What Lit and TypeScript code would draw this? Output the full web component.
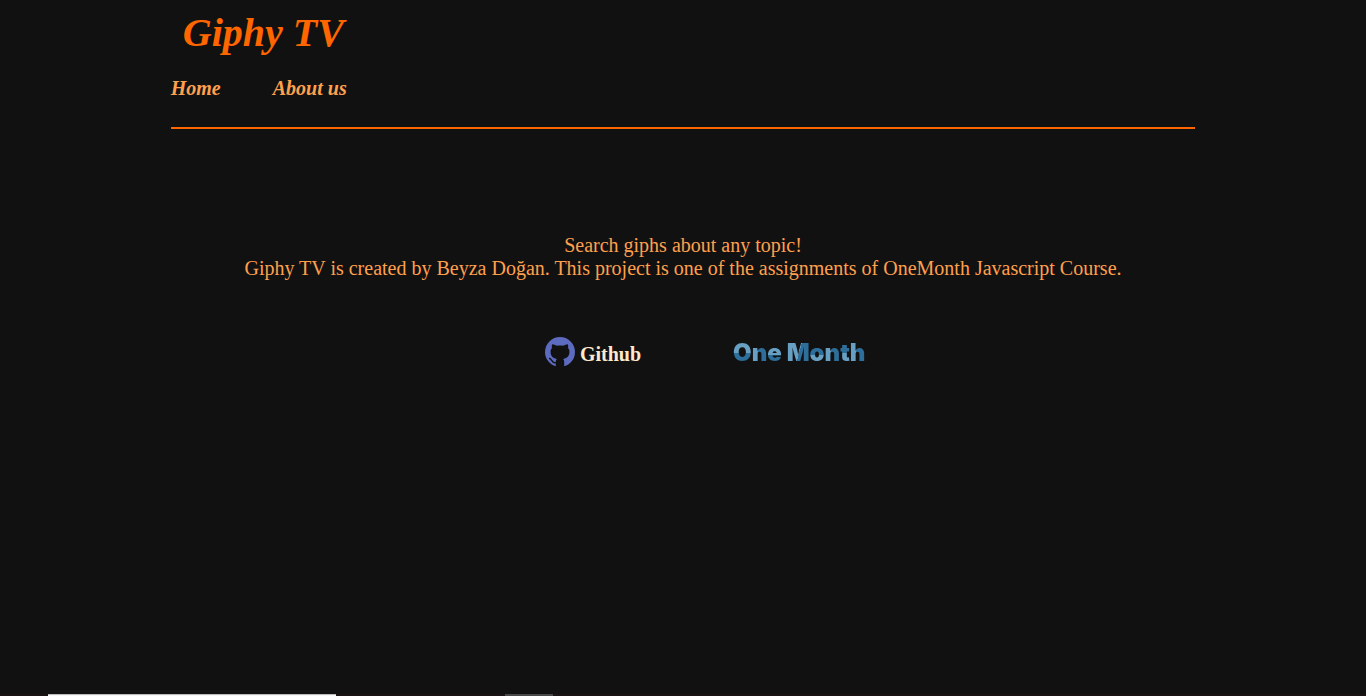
import { LitElement, html, css } from "lit";
import { customElement } from "lit/decorators.js";

// Letters of the two-tone wordmark, each with the class that colours it
const WORDMARK: [string, string][] = [
  ["O", "cap-o"],
  ["n", "stem"],
  ["e", "bowl"],
  [" ", ""],
  ["M", "cap-m"],
  ["o", "ring"],
  ["n", "stem"],
  ["t", "cross"],
  ["h", "stem"],
];

@customElement("app-root")
export class AppRoot extends LitElement {
  static styles = css`
    :host {
      --light: #68a0c4;
      --dark: #2d6f9a;
      display: flex;
      flex-direction: column;
      min-height: 100vh;
      background: #111111;
      color: #ffa04d;
      font: 20px/23px "Liberation Serif", "Times New Roman", serif;
    }
    .container {
      width: 75%;
      margin: 0 auto;
      flex: 1;
    }
    .brand {
      margin: 0;
      padding: 9px 12px 0;
      font-size: 40px;
      line-height: 48px;
      font-weight: bold;
      font-style: italic;
      color: #ff6600;
    }
    .nav {
      display: flex;
      gap: 52px;
      padding: 20px 0 27px;
      border-bottom: 2px solid #ff6600;
    }
    .nav a {
      color: inherit;
      text-decoration: none;
      font-weight: bold;
      font-style: italic;
    }
    .about {
      margin: 105px 0 0;
      text-align: center;
    }
    .links {
      display: flex;
      justify-content: center;
      align-items: center;
      gap: 92px;
      padding: 57px 0 0 42px;
    }
    .links a {
      display: flex;
      align-items: center;
      gap: 5px;
      color: #ffe8cc;
      text-decoration: none;
      font-weight: bold;
    }
    .label {
      padding-top: 4px;
    }
    .mark {
      width: 30px;
      height: 30px;
    }
    .wordmark {
      display: flex;
      width: 130px;
      padding-top: 2px;
      font: 900 24px/24px "Inter", sans-serif;
      white-space: pre;
    }
    .letter {
      color: transparent;
      -webkit-background-clip: text;
      background-clip: text;
    }
    .cap-o { background-image: linear-gradient(var(--light) 50%, var(--dark) 50%); }
    .cap-m { background-image: linear-gradient(105deg, var(--light) 52%, var(--dark) 52%); }
    .stem { background-image: linear-gradient(90deg, var(--light) 40%, var(--dark) 40%); }
    .bowl { background-image: linear-gradient(var(--light) 60%, var(--dark) 60%); }
    .ring { background-image: linear-gradient(var(--dark) 58%, var(--light) 58%); }
    .cross { background-image: linear-gradient(var(--dark) 50%, var(--light) 50%); }
    .strip {
      display: grid;
      grid-template-columns: 48px 288px 169px 48px 1fr;
      height: 2px;
      background: #191314;
    }
    .tab {
      grid-column: 2;
      background: #f5f5f5;
      border-top: 1px solid #bdbdbd;
    }
    .tile {
      grid-column: 4;
      background: #484848;
    }
  `;

  render() {
    return html`
      <div class="container">
        <header>
          <h1 class="brand">Giphy TV</h1>
          <nav class="nav"><a href="#home">Home</a><a href="#about">About us</a></nav>
        </header>
        <main>
          <p class="about">
            Search giphs about any topic!<br />
            Giphy TV is created by Beyza Doğan. This project is one of the assignments of OneMonth Javascript Course.
          </p>
          <div class="links">
            <a href="#github">
              <svg class="mark" viewBox="0 0 30 30" aria-hidden="true">
                <circle cx="15" cy="15" r="15" fill="#5c6bc0" />
                <path fill="#111111" d="M7.2 7.2c1.6 0 3.2.8 4.5 1.6 2.2-.5 4.4-.5 6.6 0 1.3-.8 2.9-1.6 4.5-1.6.6 1.4.5 2.7.2 3.8 1.2 1.3 1.6 2.8 1.4 4.6-.3 4-2.5 5.7-6.2 6.3.7.8 1 1.7 1 2.8V30h-8.400v-5.300c0-1.100.3-2 1-2.800-3.700-.6-5.900-2.300-6.200-6.300-.2-1.800.2-3.300 1.400-4.600-.3-1.100-.4-2.400.2-3.800Z" />
                <path fill="none" stroke="#111111" stroke-width="1.400" d="M4 21.200c2.600 0 2.600 3.800 5 4.400.8.2 1.500.2 2.400 0" />
              </svg>
              <span class="label">Github</span>
            </a>
            <a href="#onemonth" aria-label="One Month">
              <span class="wordmark">${WORDMARK.map(([char, tone]) => html`<span class="letter ${tone}">${char}</span>`)}</span>
            </a>
          </div>
        </main>
      </div>
      <div class="strip"><span class="tab"></span><span class="tile"></span></div>
    `;
  }
}
